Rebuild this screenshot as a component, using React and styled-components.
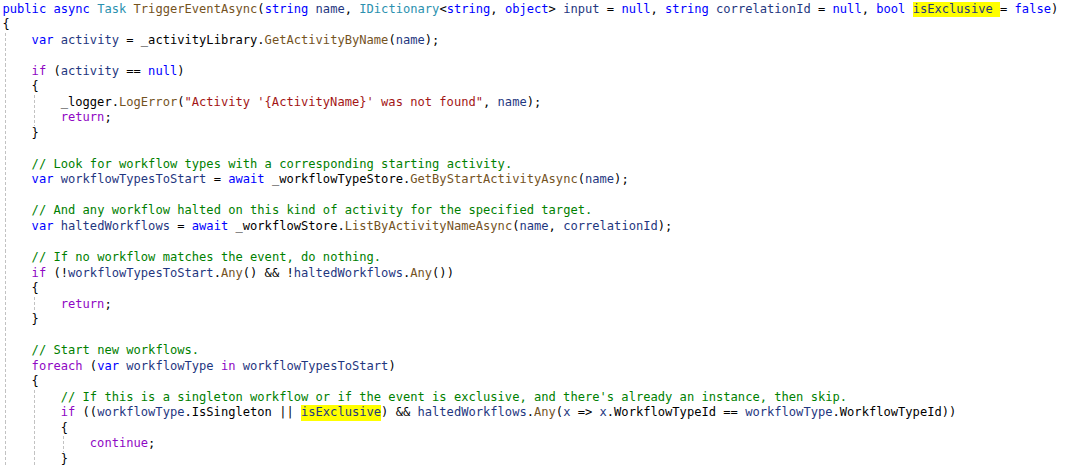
import React from 'react';
import styled, { createGlobalStyle } from 'styled-components';

const GlobalStyle = createGlobalStyle`
    html, body {
        margin: 0;
        padding: 0;
        background: #fff;
    }
`;

const COLORS = {
    kw: '#0000ff',
    ctrl: '#8f08c4',
    type: '#2b91af',
    method: '#74531f',
    local: '#1f377f',
    str: '#a31515',
    cmt: '#008000',
    plain: '#000000',
};

// [kind, text] pairs, plain strings are punctuation / fields
const t = (kind, text, hl) => ({ kind, text, hl });

const LINES = [
    { depth: 0, tokens: [t('kw', 'public'), ' ', t('kw', 'async'), ' ', t('type', 'Task'), ' ', t('method', 'TriggerEventAsync'), '(', t('kw', 'string'), ' ', t('local', 'name'), ', ', t('type', 'IDictionary'), '<', t('kw', 'string'), ', ', t('kw', 'object'), '> ', t('local', 'input'), ' = ', t('kw', 'null'), ', ', t('kw', 'string'), ' ', t('local', 'correlationId'), ' = ', t('kw', 'null'), ', ', t('kw', 'bool'), ' ', t('local', 'isExclusive ', true), '= ', t('kw', 'false'), ')'] },
    { depth: 0, tokens: ['{'] },
    { depth: 1, tokens: [t('kw', 'var'), ' ', t('local', 'activity'), ' = _activityLibrary.', t('method', 'GetActivityByName'), '(', t('local', 'name'), ');'] },
    { depth: 1, tokens: [] },
    { depth: 1, tokens: [t('ctrl', 'if'), ' (', t('local', 'activity'), ' == ', t('kw', 'null'), ')'] },
    { depth: 1, tokens: ['{'] },
    { depth: 2, tokens: ['_logger.', t('method', 'LogError'), '(', t('str', '"Activity \'{ActivityName}\' was not found"'), ', ', t('local', 'name'), ');'] },
    { depth: 2, tokens: [t('ctrl', 'return'), ';'] },
    { depth: 1, tokens: ['}'] },
    { depth: 1, tokens: [] },
    { depth: 1, tokens: [t('cmt', '// Look for workflow types with a corresponding starting activity.')] },
    { depth: 1, tokens: [t('kw', 'var'), ' ', t('local', 'workflowTypesToStart'), ' = ', t('kw', 'await'), ' _workflowTypeStore.', t('method', 'GetByStartActivityAsync'), '(', t('local', 'name'), ');'] },
    { depth: 1, tokens: [] },
    { depth: 1, tokens: [t('cmt', '// And any workflow halted on this kind of activity for the specified target.')] },
    { depth: 1, tokens: [t('kw', 'var'), ' ', t('local', 'haltedWorkflows'), ' = ', t('kw', 'await'), ' _workflowStore.', t('method', 'ListByActivityNameAsync'), '(', t('local', 'name'), ', ', t('local', 'correlationId'), ');'] },
    { depth: 1, tokens: [] },
    { depth: 1, tokens: [t('cmt', '// If no workflow matches the event, do nothing.')] },
    { depth: 1, tokens: [t('ctrl', 'if'), ' (!', t('local', 'workflowTypesToStart'), '.', t('method', 'Any'), '() && !', t('local', 'haltedWorkflows'), '.', t('method', 'Any'), '())'] },
    { depth: 1, tokens: ['{'] },
    { depth: 2, tokens: [t('ctrl', 'return'), ';'] },
    { depth: 1, tokens: ['}'] },
    { depth: 1, tokens: [] },
    { depth: 1, tokens: [t('cmt', '// Start new workflows.')] },
    { depth: 1, tokens: [t('ctrl', 'foreach'), ' (', t('kw', 'var'), ' ', t('local', 'workflowType'), ' ', t('ctrl', 'in'), ' ', t('local', 'workflowTypesToStart'), ')'] },
    { depth: 1, tokens: ['{'] },
    { depth: 2, tokens: [t('cmt', "// If this is a singleton workflow or if the event is exclusive, and there's already an instance, then skip.")] },
    { depth: 2, tokens: [t('ctrl', 'if'), ' ((', t('local', 'workflowType'), '.IsSingleton || ', t('local', 'isExclusive', true), ') && ', t('local', 'haltedWorkflows'), '.', t('method', 'Any'), '(', t('local', 'x'), ' => ', t('local', 'x'), '.WorkflowTypeId == ', t('local', 'workflowType'), '.WorkflowTypeId))'] },
    { depth: 2, tokens: ['{'] },
    { depth: 3, tokens: [t('ctrl', 'continue'), ';'] },
    { depth: 2, tokens: ['}'] },
];

export default function App() {
    return (
        <>
            <GlobalStyle />
            <Editor>
                {LINES.map((line, i) => (
                    <Line key={i}>
                        {Array.from({ length: line.depth }).map((_, g) => (
                            <Indent key={g} />
                        ))}
                        {line.tokens.map((tok, j) =>
                            typeof tok === 'string' ? (
                                <Token key={j} $kind="plain">{tok}</Token>
                            ) : (
                                <Token key={j} $kind={tok.kind} $hl={tok.hl}>{tok.text}</Token>
                            )
                        )}
                    </Line>
                ))}
            </Editor>
        </>
    );
}

const Editor = styled.div`
    width: 1068px;
    height: 470px;
    overflow: hidden;
    box-sizing: border-box;
    padding: 1.5px 0 0 2.5px;
    background: #fff;
    font-family: "DejaVu Sans Mono", "Liberation Mono", monospace;
    font-size: 12.1px;
    line-height: 15.54px;
`;

const Line = styled.div`
    display: flex;
    height: 15.54px;
    white-space: pre;
`;

// indent guide: dashed grey rule just inside each indent level
const Indent = styled.span`
    flex: none;
    width: 4ch;
    height: 100%;
    background-image: repeating-linear-gradient(to bottom, #c2c2c2 0 3px, transparent 3px 5px);
    background-size: 1px 100%;
    background-position: 2px 0;
    background-repeat: no-repeat;
`;

const Token = styled.span`
    color: ${p => COLORS[p.$kind]};
    background: ${p => (p.$hl ? '#ffff00' : 'transparent')};
`;
